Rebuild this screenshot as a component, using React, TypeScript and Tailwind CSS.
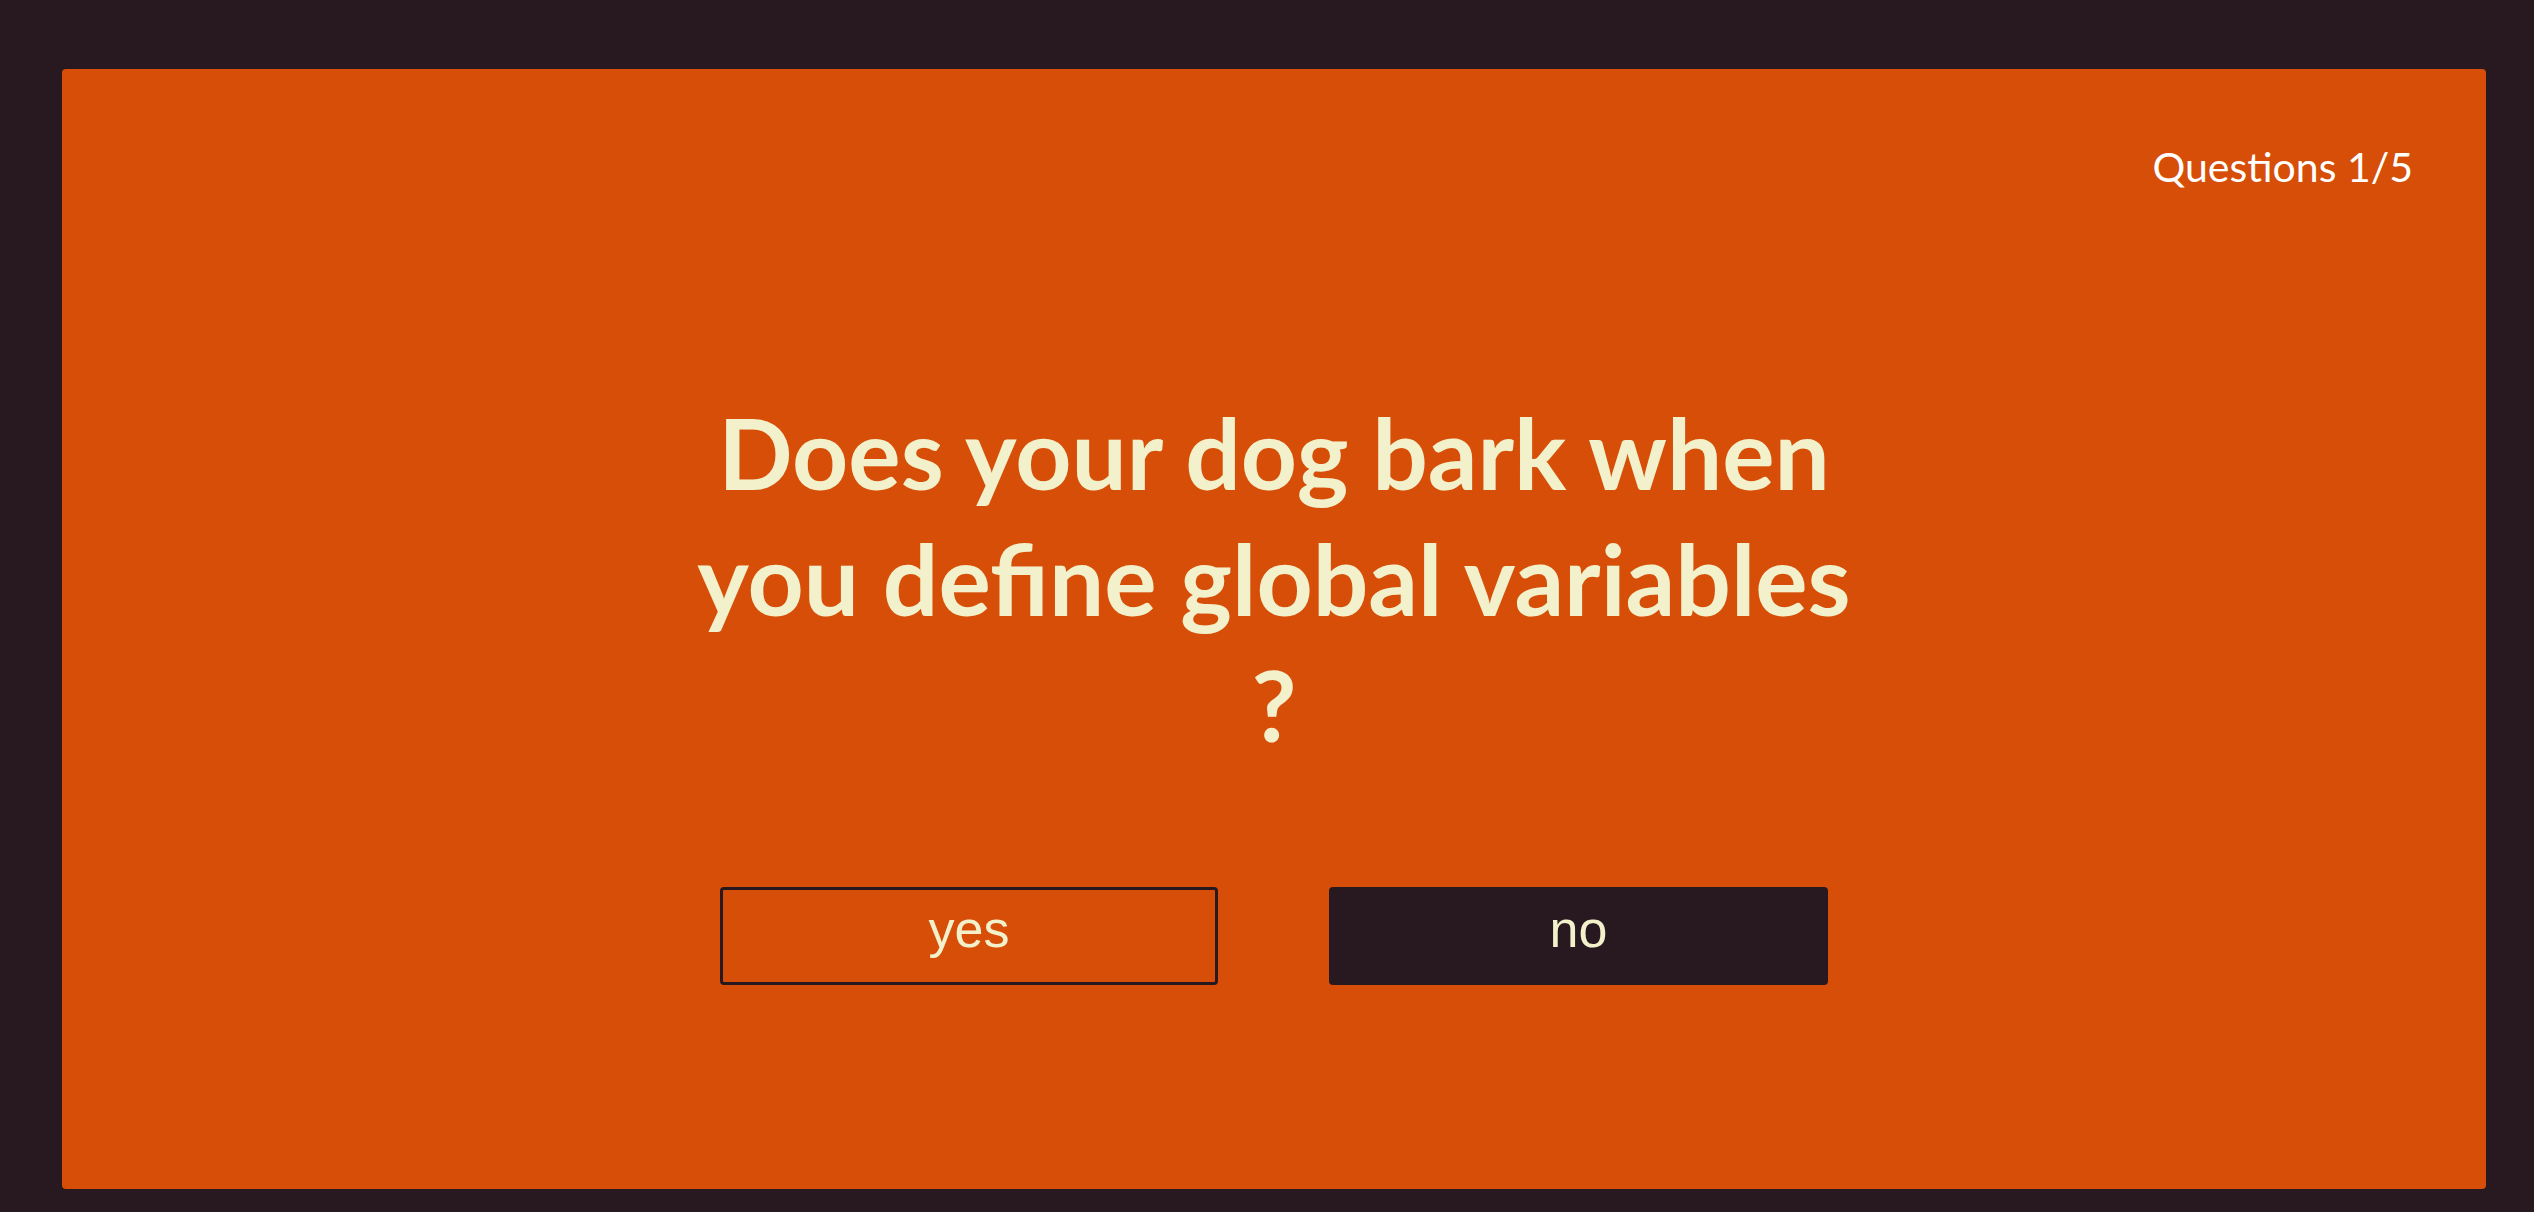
export default function App() {
  return (
    <div className="min-h-screen w-full bg-[#28181f] pt-[69px] pl-[62px] pr-[48px] pb-[23px]">
      <div className="flex h-[1120px] flex-col rounded-[4px] bg-[#d64e08]">
        {/* Progress */}
        <div className="flex justify-end pt-[73px] pr-[73px]">
          <span className="font-['Lato',sans-serif] text-[41px] leading-[50px] text-white">
            Questions 1/5
          </span>
        </div>

        {/* Question */}
        <h1 className="mx-auto mt-[197px] max-w-[1190px] text-center font-['Lato',sans-serif] text-[98px] font-bold leading-[126px] text-[#f2f1cb]">
          Does your dog bark when you define global variables ?
        </h1>

        {/* Answers */}
        <div className="mt-[120px] flex justify-center gap-[111px]">
          <button className="h-[98px] w-[498px] rounded-[4px] border-[3px] border-[#28181f] pb-[14px] font-['Liberation_Sans',Arial,sans-serif] text-[52px] text-[#f2f1cb]">
            yes
          </button>
          <button className="h-[98px] w-[499px] rounded-[4px] bg-[#28181f] pb-[14px] font-['Liberation_Sans',Arial,sans-serif] text-[52px] text-[#f2f1cb]">
            no
          </button>
        </div>
      </div>
    </div>
  );
}
